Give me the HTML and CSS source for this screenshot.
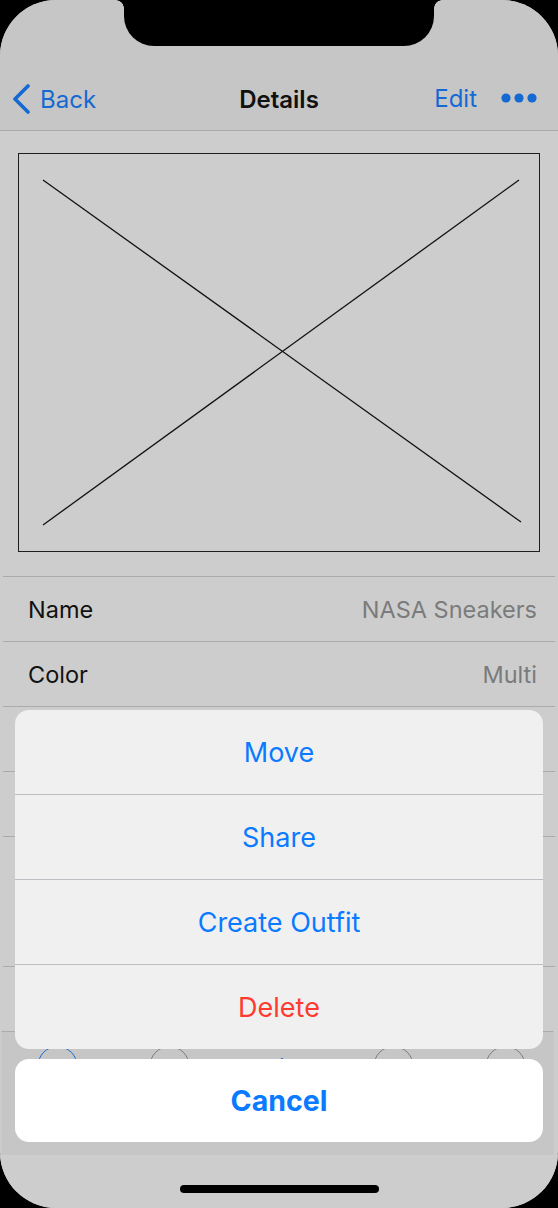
FILE: index.html
```html
<!DOCTYPE html>
<html>
<head>
<meta charset="utf-8">
<link rel="stylesheet" href="styles.css">
</head>
<body>
<div class="screen">
  <div class="notch"></div>
  <div class="status"></div>
  <header class="nav">
    <div class="nav-left">
      <svg class="chev" width="20" height="30" viewBox="0 0 20 30"><path d="M16 2 L3 15 L16 28" fill="none" stroke="#1569d3" stroke-width="3.6" stroke-linecap="round" stroke-linejoin="round"/></svg>
      <span>Back</span>
    </div>
    <div class="nav-title">Details</div>
    <div class="nav-right">
      <span>Edit</span>
      <svg width="36" height="10" viewBox="0 0 36 10"><circle cx="5" cy="5" r="4.6" fill="#1569d3"/><circle cx="18" cy="5" r="4.6" fill="#1569d3"/><circle cx="31" cy="5" r="4.6" fill="#1569d3"/></svg>
    </div>
  </header>
  <main class="content">
    <div class="photo">
      <svg width="520" height="397" viewBox="0 0 520 397"><line x1="24" y1="26" x2="502" y2="368" stroke="#111" stroke-width="1.3"/><line x1="500" y1="26" x2="24" y2="371" stroke="#111" stroke-width="1.3"/></svg>
    </div>
    <div class="rows">
      <div class="row"><span class="label">Name</span><span class="value">NASA Sneakers</span></div>
      <div class="row"><span class="label">Color</span><span class="value">Multi</span></div>
      <div class="row"><span class="label">Brand</span><span class="value">Nike</span></div>
      <div class="row"><span class="label">Size</span><span class="value">10</span></div>
      <div class="row tall"><span class="label">Notes</span></div>
      <div class="row"><span class="label">Added</span></div>
    </div>
  </main>
  <div class="toolbar">
    <span class="cell"><span class="tool blue"></span></span>
    <span class="cell"><span class="tool"></span></span>
    <span class="cell"><span class="tool-dot"></span></span>
    <span class="cell"><span class="tool"></span></span>
    <span class="cell"><span class="tool"></span></span>
  </div>
  <div class="home"><div class="home-bar"></div></div>

  <div class="sheet">
    <div class="group">
      <div class="action">Move</div>
      <div class="action">Share</div>
      <div class="action">Create Outfit</div>
      <div class="action danger">Delete</div>
    </div>
    <div class="cancel">Cancel</div>
  </div>
</div>
</body>
</html>
```
FILE: styles.css
```css
html, body {
  margin: 0;
  padding: 0;
  background: #000;
}
body {
  width: 558px;
  height: 1208px;
  overflow: hidden;
  font-family: "Inter", "Liberation Sans", sans-serif;
}
.screen {
  position: relative;
  width: 558px;
  height: 1208px;
  border-radius: 56px;
  overflow: hidden;
  background: #cdcdcd;
  display: flex;
  flex-direction: column;
}
.notch {
  position: absolute;
  top: 0;
  left: 124px;
  width: 310px;
  height: 46px;
  background: #000;
  border-radius: 0 0 30px 30px;
}
.notch::before, .notch::after {
  content: "";
  position: absolute;
  top: 0;
  width: 8px;
  height: 8px;
}
.notch::before {
  left: -8px;
  background: radial-gradient(circle at 0 8px, transparent 7.5px, #000 8px);
}
.notch::after {
  right: -8px;
  background: radial-gradient(circle at 8px 8px, transparent 7.5px, #000 8px);
}
.status {
  height: 60px;
  background: #c6c6c6;
  flex: none;
}
.nav {
  height: 70px;
  flex: none;
  background: #c6c6c6;
  border-bottom: 1px solid #a9a9a9;
  display: flex;
  align-items: center;
  justify-content: space-between;
  padding: 0 21px 0 12px;
  position: relative;
  color: #1569d3;
  font-size: 24px;
}
.nav-left {
  display: flex;
  align-items: center;
  gap: 8px;
  padding-top: 8px;
}
.nav-title {
  position: absolute;
  left: 0;
  right: 0;
  text-align: center;
  color: #111;
  font-weight: 600;
  font-size: 24px;
  padding-top: 8px;
  pointer-events: none;
}
.nav-right {
  display: flex;
  align-items: center;
  gap: 24px;
  padding-top: 6px;
}
.content {
  flex: none;
  padding: 22px 0 0;
}
.photo {
  margin: 0 18px;
  width: 520px;
  height: 397px;
  border: 1.6px solid #1e1e1e;
  overflow: hidden;
}
.photo svg {
  display: block;
}
.rows {
  margin-top: 24px;
  padding: 0 3px;
}
.row {
  height: 65px;
  border-top: 1.5px solid #ababab;
  display: flex;
  align-items: center;
  justify-content: space-between;
  padding: 0 18px 0 25px;
  font-size: 23.5px;
  box-sizing: border-box;
}
.row.tall {
  height: 130px;
}
.label {
  color: #111;
}
.value {
  color: #7b7b7b;
}
.toolbar {
  flex: none;
  height: 124px;
  border-top: 1.5px solid #ababab;
  margin: 0 3px;
  background: #c6c6c6;
  display: grid;
  grid-template-columns: repeat(5, 112px);
  justify-items: center;
  align-items: start;
  padding: 14px 0 0;
  box-sizing: border-box;
  transform: translateX(-1.5px);
}
.cell {
  display: flex;
  justify-content: center;
}
.tool {
  width: 38px;
  height: 38px;
  border-radius: 50%;
  border: 1.5px solid #7b7b7b;
}
.tool.blue {
  border-color: #1569d3;
}
.tool-dot {
  width: 3px;
  height: 3px;
  margin-top: 12px;
  background: #1569d3;
  border-radius: 50%;
}
.home {
  flex: 1;
  background: #cdcdcd;
  display: flex;
  justify-content: center;
  padding-top: 30px;
}
.home-bar {
  width: 199px;
  height: 8px;
  border-radius: 4px;
  background: #000;
}
.sheet {
  position: absolute;
  left: 15px;
  right: 15px;
  top: 710px;
  display: flex;
  flex-direction: column;
  gap: 10px;
}
.group {
  background: #f0f0f0;
  border-radius: 14px;
  overflow: hidden;
}
.action {
  height: 85px;
  display: flex;
  align-items: center;
  justify-content: center;
  font-size: 27px;
  color: #0a7aff;
  border-top: 1px solid #bcbcc2;
  box-sizing: border-box;
}
.action:first-child {
  border-top: none;
  height: 84px;
}
.action.danger {
  color: #ff3b30;
}
.cancel {
  height: 83px;
  background: #fff;
  border-radius: 14px;
  display: flex;
  align-items: center;
  justify-content: center;
  font-size: 28.5px;
  font-weight: 700;
  color: #0a7aff;
}
```
